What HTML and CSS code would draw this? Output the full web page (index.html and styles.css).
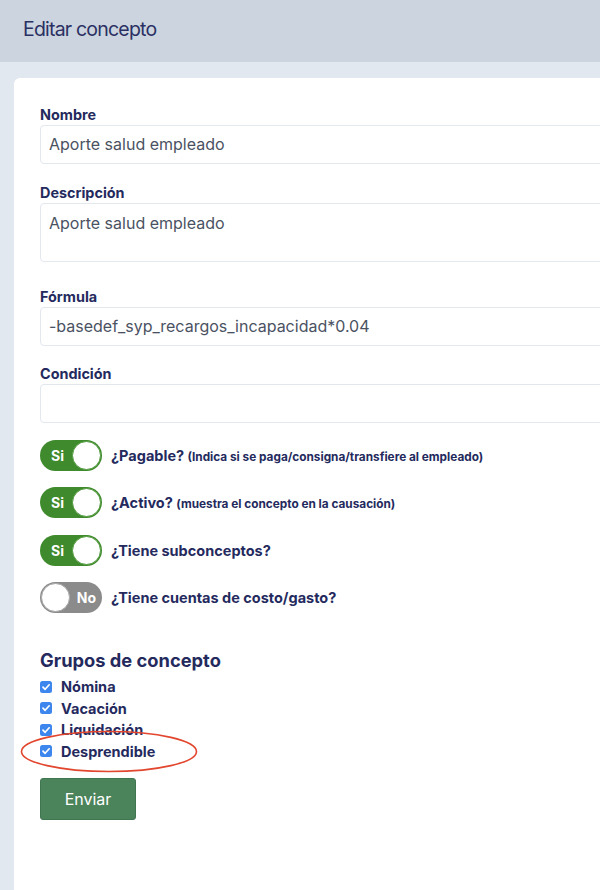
FILE: index.html
```html
<!DOCTYPE html>
<html lang="es">
<head>
<meta charset="utf-8">
<title>Editar concepto</title>
<link rel="stylesheet" href="styles.css">
</head>
<body>
<header class="topbar"><h1 class="title">Editar concepto</h1></header>
<main class="page">
  <section class="card">
    <form class="form">
      <div class="field">
        <label class="label">Nombre</label>
        <div class="input">Aporte salud empleado</div>
      </div>
      <div class="field field-wide">
        <label class="label">Descripción</label>
        <div class="input textarea">Aporte salud empleado</div>
      </div>
      <div class="field">
        <label class="label">Fórmula</label>
        <div class="input">-basedef_syp_recargos_incapacidad*0.04</div>
      </div>
      <div class="field">
        <label class="label">Condición</label>
        <div class="input"></div>
      </div>

      <div class="toggles">
        <div class="toggle-row">
          <span class="toggle on"><span class="toggle-text">Si</span><span class="knob"></span></span>
          <span class="toggle-label">¿Pagable? <small>(Indica si se paga/consigna/transfiere al empleado)</small></span>
        </div>
        <div class="toggle-row">
          <span class="toggle on"><span class="toggle-text">Si</span><span class="knob"></span></span>
          <span class="toggle-label">¿Activo? <small>(muestra el concepto en la causación)</small></span>
        </div>
        <div class="toggle-row">
          <span class="toggle on"><span class="toggle-text">Si</span><span class="knob"></span></span>
          <span class="toggle-label">¿Tiene subconceptos?</span>
        </div>
        <div class="toggle-row">
          <span class="toggle off"><span class="knob"></span><span class="toggle-text">No</span></span>
          <span class="toggle-label">¿Tiene cuentas de costo/gasto?</span>
        </div>
      </div>

      <h2 class="groups-title">Grupos de concepto</h2>
      <div class="checks">
        <div class="check-row"><span class="box"><svg viewBox="0 0 12 12" width="12" height="12"><path d="M3 6.2 L5.1 8.3 L9.2 3.8" fill="none" stroke="#fff" stroke-width="1.7" stroke-linecap="round" stroke-linejoin="round"/></svg></span>Nómina</div>
        <div class="check-row"><span class="box"><svg viewBox="0 0 12 12" width="12" height="12"><path d="M3 6.2 L5.1 8.3 L9.2 3.8" fill="none" stroke="#fff" stroke-width="1.7" stroke-linecap="round" stroke-linejoin="round"/></svg></span>Vacación</div>
        <div class="check-row"><span class="box"><svg viewBox="0 0 12 12" width="12" height="12"><path d="M3 6.2 L5.1 8.3 L9.2 3.8" fill="none" stroke="#fff" stroke-width="1.7" stroke-linecap="round" stroke-linejoin="round"/></svg></span>Liquidación</div>
        <div class="check-row"><span class="box"><svg viewBox="0 0 12 12" width="12" height="12"><path d="M3 6.2 L5.1 8.3 L9.2 3.8" fill="none" stroke="#fff" stroke-width="1.7" stroke-linecap="round" stroke-linejoin="round"/></svg></span>Desprendible</div>
        <svg class="mark" viewBox="0 0 180 43" width="180" height="43"><ellipse cx="89" cy="21.5" rx="87.5" ry="20" fill="none" stroke="#e2462e" stroke-width="1.6"/></svg>
      </div>

      <button type="button" class="btn">Enviar</button>
    </form>
  </section>
</main>
</body>
</html>
```

FILE: styles.css
```css
* { box-sizing: border-box; }
html, body { margin: 0; padding: 0; }
body {
  width: 600px;
  height: 890px;
  overflow: hidden;
  background: #e2e8f0;
  font-family: Inter, "Noto Sans", "Liberation Sans", sans-serif;
}
.topbar {
  height: 62px;
  background: #ccd5df;
  display: flex;
  align-items: center;
  padding-left: 23px;
}
.title {
  margin: 0;
  margin-top: -5px;
  font-size: 19.5px;
  font-weight: 400;
  letter-spacing: -0.8px;
  color: #2b3063;
}
.page {
  padding: 16px 0 0 14px;
  overflow: hidden;
}
.card {
  background: #fff;
  border-radius: 6px 0 0 0;
  min-height: 830px;
  width: 620px;
  padding: 27px 0 40px 26px;
}
.form { width: 600px; }
.field { margin-bottom: 18.5px; }
.field-wide { margin-bottom: 25px; }
.label {
  display: block;
  font-size: 14.4px;
  font-weight: 700;
  line-height: 20px;
  margin-bottom: 0;
  color: #242a5d;
}
.input {
  height: 39px;
  border: 1px solid #e3e8ef;
  border-radius: 4px;
  padding: 0 8px;
  font-size: 16px;
  line-height: 37px;
  color: #4a5262;
}
.textarea {
  height: 59px;
  line-height: 20px;
  padding-top: 9px;
}
.toggles {
  display: flex;
  flex-direction: column;
  gap: 16.4px;
  margin-top: -1.5px;
}
.toggle-row {
  display: flex;
  align-items: center;
  gap: 9px;
}
.toggle {
  width: 62px;
  height: 31px;
  border-radius: 16px;
  display: flex;
  align-items: center;
  flex: none;
  padding: 1px;
}
.toggle.on { background: #3e8a2c; justify-content: space-between; padding-left: 11px; }
.toggle.off { background: #8b8b8b; justify-content: space-between; padding-right: 6px; }
.toggle-text {
  color: #fff;
  font-size: 14px;
  font-weight: 700;
}
.knob {
  width: 29px;
  height: 29px;
  border-radius: 50%;
  background: #fff;
  border: 1px solid #4f9a3c;
}
.toggle.off .knob { border-color: #a5a5a5; }
.toggle-label {
  font-size: 14.5px;
  font-weight: 700;
  color: #242a5d;
}
.toggle-label small {
  font-size: 11.8px;
  font-weight: 700;
}
.groups-title {
  margin: 35px 0 4px;
  font-size: 18.3px;
  font-weight: 700;
  line-height: 24px;
  color: #242a5d;
}
.checks {
  position: relative;
  margin-bottom: 16px;
}
.check-row {
  display: flex;
  align-items: center;
  gap: 9px;
  height: 21.4px;
  font-size: 14.5px;
  font-weight: 700;
  color: #242a5d;
}
.box {
  width: 12px;
  height: 12px;
  border-radius: 2.5px;
  background: #3d86ee;
  display: flex;
  flex: none;
}
.mark {
  position: absolute;
  left: -20px;
  top: 54px;
  pointer-events: none;
}
.btn {
  width: 96px;
  height: 42px;
  border: 1px solid #3f7650;
  border-radius: 3px;
  background: #4b835b;
  color: #fff;
  font-family: Inter, "Noto Sans", "Liberation Sans", sans-serif;
  font-size: 16px;
  font-weight: 400;
}
```
